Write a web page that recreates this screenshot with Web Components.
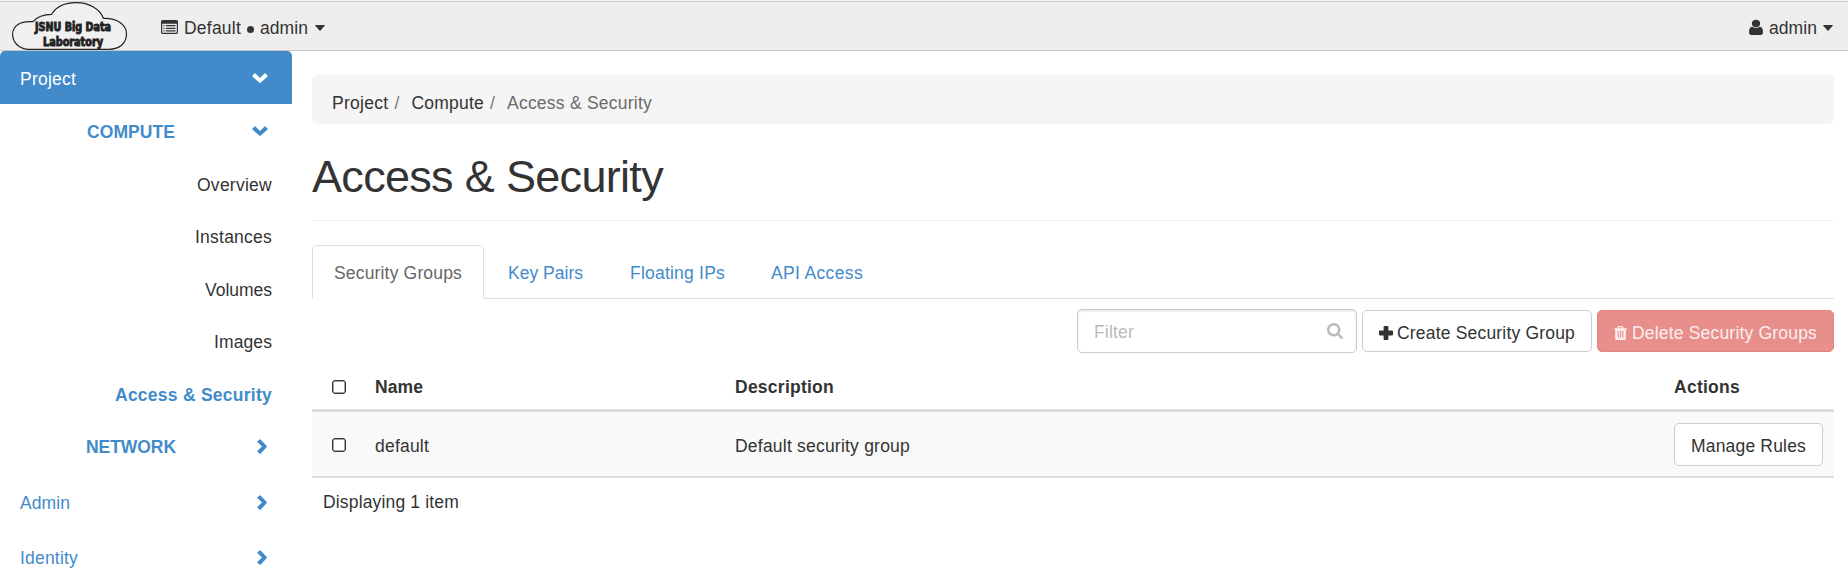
<!DOCTYPE html>
<html lang="en"><head><meta charset="utf-8"><title>Access &amp; Security</title>
<style>html,body{margin:0;height:100%;overflow:hidden;background:#fff}body{font:17.5px/24px "Liberation Sans",Arial,sans-serif;color:#333}</style></head>
<body><horizon-app></horizon-app>
<script>
const define=(name,css,html,ready)=>customElements.define(name,class extends HTMLElement{
  constructor(){super();this.attachShadow({mode:'open'}).innerHTML=`<style>*{box-sizing:border-box}${css}</style>${html}`}
  connectedCallback(){if(ready)ready(this)}
});
const icons={
  list:['0 128 1792 1408','M384 1184v64q0 13-9.5 22.5T352 1280h-64q-13 0-22.500-9.500T256 1248v-64q0-13 9.500-22.500T288 1152h64q13 0 22.500 9.500T384 1184zm0-256v64q0 13-9.500 22.500T352 1024h-64q-13 0-22.500-9.500T256 992v-64q0-13 9.500-22.500T288 896h64q13 0 22.500 9.500T384 928zm0-256v64q0 13-9.500 22.500T352 768h-64q-13 0-22.500-9.500T256 736v-64q0-13 9.500-22.500T288 640h64q13 0 22.500 9.500T384 672zm1152 512v64q0 13-9.500 22.500t-22.500 9.500H544q-13 0-22.500-9.500T512 1248v-64q0-13 9.500-22.500T544 1152h960q13 0 22.500 9.500t9.500 22.500zm0-256v64q0 13-9.500 22.500t-22.500 9.500H544q-13 0-22.500-9.500T512 992v-64q0-13 9.500-22.500T544 896h960q13 0 22.500 9.500t9.500 22.500zm0-256v64q0 13-9.500 22.500t-22.500 9.500H544q-13 0-22.500-9.500T512 736v-64q0-13 9.500-22.500T544 640h960q13 0 22.500 9.500t9.500 22.500zm128 704V544q0-13-9.500-22.500T1632 512H160q-13 0-22.500 9.500T128 544v832q0 13 9.500 22.500t22.500 9.500h1472q13 0 22.500-9.500t9.500-22.500zm128-1088v1088q0 66-47 113t-113 47H160q-66 0-113-47T0 1376V288q0-66 47-113t113-47h1472q66 0 113 47t47 113z'],
  user:['0 0 1280 1408','M1280 1137q0 109-62.500 187t-150.500 78H213q-88 0-150.500-78T0 1137q0-85 8.500-160.500t31.500-152 58.500-131 94-89T327 570q131 128 313 128t313-128q76 0 134.500 34.500t94 89 58.500 131 31.500 152T1280 1137zM1024 256q0 159-112.500 271.500T640 640 368.500 527.500 256 256 368.500-15.500 640-128t271.500 112.500T1024 256z'],
  caret:['0 0 10 6','M.6 0h8.800q.9 0 .3.800L5.500 5.400q-.5.500-1 0L.3.800Q-.3 0 .6 0z'],
  down:['0 0 16 10','M.4 2.700 2.500.5q.5-.5 1 0L8 5l4.500-4.500q.5-.5 1 0l2.100 2.200q.5.400 0 .9L8.500 9.800q-.5.400-1 0L.4 3.600q-.5-.5 0-.9z'],
  right:['0 0 10 16','M2.700.4.500 2.500q-.5.500 0 1L5 8 .5 12.500q-.5.500 0 1l2.200 2.100q.4.500.9 0l6.200-7.100q.4-.5 0-1L3.600.4q-.5-.5-.9 0z'],
  plus:['0 0 14 14','M5.600 0h2.800q1 0 1 1v3.600H13q1 0 1 1v2.800q0 1-1 1H9.400V13q0 1-1 1H5.600q-1 0-1-1V9.400H1q-1 0-1-1V5.600q0-1 1-1h3.600V1q0-1 1-1z'],
  trash:['0 0 1408 1536','M512 1248V544q0-32-32-32h-64q-32 0-32 32v704q0 32 32 32h64q32 0 32-32zm256 0V544q0-32-32-32h-64q-32 0-32 32v704q0 32 32 32h64q32 0 32-32zm256 0V544q0-32-32-32h-64q-32 0-32 32v704q0 32 32 32h64q32 0 32-32zM480 256h448l-48-117q-7-9-17-11H546q-10 2-17 11zm928 32v64q0 32-32 32h-96v948q0 83-47 143.500T1120 1536H288q-66 0-113-58.500T128 1336V384H32q-32 0-32-32v-64q0-32 32-32h309l70-167q15-37 54-63t79-26h320q40 0 79 26t54 63l70 167h309q32 0 32 32z'],
  search:['0 0 1664 1664','M1152 704q0-185-131.500-316.500T704 256 387.500 387.500 256 704t131.500 316.500T704 1152t316.500-131.500T1152 704zm512 832q0 52-38 90t-90 38q-54 0-90-38l-343-342q-179 124-399 124-143 0-273.500-55.500t-225-150-150-225T0 704t55.500-273.500 150-225 225-150T704 0t273.500 55.500 225 150 150 225T1408 704q0 220-124 399l343 343q37 37 37 90z']
};
define('h-icon',':host{display:block;flex:none}svg{display:block;width:100%;height:100%;fill:currentColor;overflow:visible}','<svg preserveAspectRatio="none"><path/></svg>',e=>{
  const [box,d]=icons[e.getAttribute('name')];e.shadowRoot.querySelector('svg').setAttribute('viewBox',box);e.shadowRoot.querySelector('path').setAttribute('d',d)});
// A label tracked out evenly so that its run fills the given width.
define('h-text',':host{display:inline-block;flex:none;white-space:nowrap}span{display:inline-block;padding-top:var(--drop,2px)}','<span><slot></slot></span>',e=>{
  const w=+e.getAttribute('w'),s=e.shadowRoot.querySelector('span');
  s.style.letterSpacing=(w-s.getBoundingClientRect().width)/e.textContent.length+'px';e.style.width=w+'px'});
define('h-logo',':host{display:block;width:116px;height:50px}svg{display:block}text{font:900 12px "DejaVu Sans Condensed","DejaVu Sans",sans-serif;fill:#222;stroke:#222;stroke-width:.9}',
 `<svg width="116" height="50" viewBox="0 0 116 50"><path d="M17 49.300C7 49.300.6 42 .6 34.500.6 26 8 20.500 21 21.700 25 17 32 14.300 39.700 14.300 44 7 53 2.700 64.500 2.700 77 2.700 88 9 91.500 18.500 104 18 114.500 24 114.500 34 114.500 43 108 49.300 97 49.300Z" fill="#f0f0f0" stroke="#222" stroke-width="1.200"/><text x="23" y="30.500" textLength="76" lengthAdjust="spacingAndGlyphs">JSNU Big Data</text><text x="31" y="45.500" textLength="60" lengthAdjust="spacingAndGlyphs">Laboratory</text></svg>`);
define('h-topbar',':host{--drop:1px;display:flex;align-items:center;height:51px;margin:0;padding:0 15px 0 12px;background:#eee;border-bottom:1px solid #c8c8c8;box-shadow:inset 0 1px #f6f6f6,inset 0 2px #c8c8c8}.ctx{margin-left:33px;display:flex;align-items:center;padding-top:5px}.user{margin-left:auto;display:flex;align-items:center;padding-top:5px}.dot{width:7px;height:7px;border-radius:50%;background:#333;margin:3px 6px 0 6px}.c{width:10px;height:6px;margin-left:7px}.user .c{margin-left:6px}',
 `<h-logo></h-logo><div class="ctx"><h-icon name="list" style="width:17px;height:14px;margin:0 6px 2px 0"></h-icon><h-text w="57">Default</h-text><i class="dot"></i><h-text w="48">admin</h-text><h-icon class="c" name="caret"></h-icon></div><div class="user"><h-icon name="user" style="width:14px;height:14px;margin-right:6px"></h-icon><h-text w="48">admin</h-text><h-icon class="c" name="caret"></h-icon></div>`);
define('h-nav-item',':host{--drop:1px;display:flex;align-items:center;height:52.5px;padding:0 20px;color:#333}:host([kind=panel]){justify-content:flex-end}:host([kind=group]){font-weight:bold;color:#428bca}:host([current]){font-weight:bold;color:#428bca}:host([kind=root]){height:55px;color:#428bca}:host([kind=active]){height:53px;background:#428bca;color:#fff;border-radius:5px 5px 0 0}:host([kind=group]) .t{width:222px;text-align:center}.t{padding-top:2px}',
 '<div class="t"><slot></slot></div><slot name="icon"></slot>');
define('h-sidebar',':host{display:block;width:292px;flex:none}h-icon{margin-left:auto}.d{width:16px;height:10px;margin-right:4px}.r{width:10px;height:15px;margin:1px 5px 0 auto}',
 `<h-nav-item kind="active"><h-text w="56">Project</h-text><h-icon slot="icon" class="d" name="down"></h-icon></h-nav-item>
 <h-nav-item kind="group"><h-text w="88">COMPUTE</h-text><h-icon slot="icon" class="d" name="down" style="margin-top:1px"></h-icon></h-nav-item>
 <h-nav-item kind="panel" style="margin-top:.5px"><h-text w="75">Overview</h-text></h-nav-item><h-nav-item kind="panel"><h-text w="77">Instances</h-text></h-nav-item><h-nav-item kind="panel"><h-text w="67">Volumes</h-text></h-nav-item><h-nav-item kind="panel"><h-text w="58">Images</h-text></h-nav-item><h-nav-item kind="panel" current><h-text w="157">Access &amp; Security</h-text></h-nav-item>
 <h-nav-item kind="group"><h-text w="90">NETWORK</h-text><h-icon slot="icon" class="r" name="right"></h-icon></h-nav-item>
 <h-nav-item kind="root" style="margin-top:2px"><h-text w="50">Admin</h-text><h-icon slot="icon" class="r" name="right"></h-icon></h-nav-item><h-nav-item kind="root"><h-text w="58">Identity</h-text><h-icon slot="icon" class="r" name="right"></h-icon></h-nav-item>`);
define('h-breadcrumb',':host{--drop:1px;display:flex;align-items:center;height:49px;padding:6px 20px 0;background:#f5f5f5;border-radius:5px}.s{color:#777;margin:0 11px 0 6px}.a{color:#6b6b6b}',
 '<h-text w="56.5">Project</h-text><h-text class="s" w="6">/</h-text><h-text w="72.5">Compute</h-text><h-text class="s" w="6">/</h-text><h-text class="a" w="145">Access &amp; Security</h-text>');
define('h-tabs',':host{--drop:1px;display:flex;height:54px;border-bottom:1px solid #ddd;color:#428bca}.on{width:172px;height:54px;border:1px solid #ddd;border-bottom-color:#fff;border-radius:5px 5px 0 0;color:#666;padding-left:21px;margin-right:24px}div{padding-top:15px}.on{padding-top:14px}',
 '<div class="on"><h-text w="128">Security Groups</h-text></div><div style="width:122px"><h-text w="75">Key Pairs</h-text></div><div style="width:141px"><h-text w="95">Floating IPs</h-text></div><div><h-text w="92">API Access</h-text></div>');
define('h-button',':host{--drop:1px;display:flex;align-items:center;height:42px;border:1px solid #ccc;border-radius:5px;background:#fff;color:#333;padding:3px 16px 0}:host([danger]){background:#e88f8c;border-color:#e48380;color:#fbeeed}','<slot></slot>');
define('h-search',':host{display:flex;align-items:center;width:280px;height:44px;border:1px solid #ccc;border-radius:5px;box-shadow:inset 0 1px 2px rgba(0,0,0,.12);color:#bbb;padding:0 13px 0 16px}h-icon{width:16px;height:16px;margin-left:auto}','<h-text w="40">Filter</h-text><h-icon name="search"></h-icon>');
define('h-toolbar',':host{display:flex;justify-content:flex-end;align-items:center;gap:5px;height:44px;margin-top:10px}',
 `<h-search></h-search><h-button style="width:230px"><h-icon name="plus" style="width:14px;height:14px;margin-right:4px"></h-icon><h-text w="178">Create Security Group</h-text></h-button><h-button danger style="width:237px"><h-icon name="trash" style="width:13px;height:14px;margin-right:5px"></h-icon><h-text w="185">Delete Security Groups</h-text></h-button>`);
define('h-check',':host{display:block;width:14px;height:14px;border:1px solid #333;box-shadow:inset 0 0 0 .5px #555;border-radius:3px;background:#fff;margin:2px 0 0 20px}','');
define('h-table',':host{--drop:1px;display:block;margin-top:9px}.row{display:grid;grid-template-columns:63px 360px 939px 1fr;align-items:center}.head{height:50px;font-weight:bold;border-bottom:3px solid #ddd}.body{height:66px;background:#f9f9f9;border-bottom:2px solid #ddd}.foot{padding:9px 11px}h-text{padding-top:2px}.body h-text{padding-top:3px}h-button h-text{padding:0!important}',
 `<div class="row head"><h-check></h-check><h-text w="48">Name</h-text><h-text w="99">Description</h-text><h-text w="66">Actions</h-text></div><div class="row body"><h-check></h-check><h-text w="54">default</h-text><h-text w="175">Default security group</h-text><h-button style="width:149px;height:43px"><h-text w="115">Manage Rules</h-text></h-button></div><div class="foot"><h-text w="136">Displaying 1 item</h-text></div>`);
define('horizon-app',':host{display:block}.page{display:flex}main{width:1522px;margin-left:20px;padding-top:24px}h1{--drop:0px;margin:27px 0 0;height:70px;border-bottom:1px solid #eee;font-weight:normal;font-size:45px;line-height:52px}h-tabs{margin-top:24px}',
 `<h-topbar></h-topbar><div class="page"><h-sidebar></h-sidebar><main><h-breadcrumb></h-breadcrumb><h1><h-text w="351">Access &amp; Security</h-text></h1><h-tabs></h-tabs><h-toolbar></h-toolbar><h-table></h-table></main></div>`);
</script></body></html>
